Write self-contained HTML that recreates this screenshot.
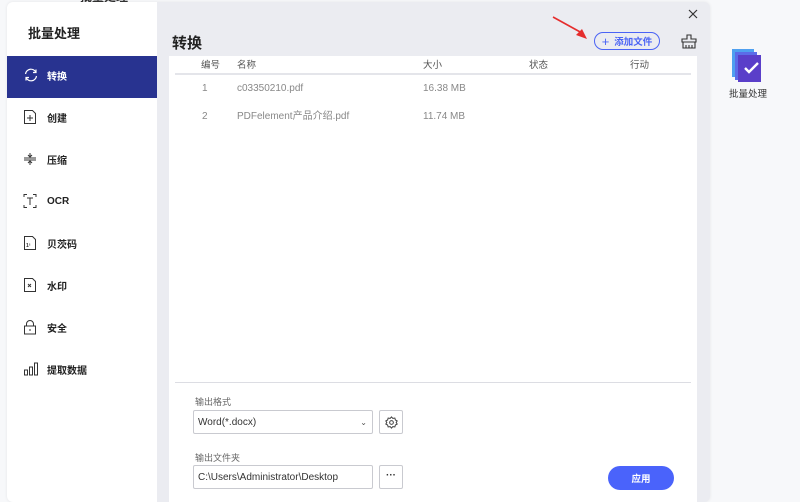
<!DOCTYPE html>
<html><head><meta charset="utf-8"><style>
*{margin:0;padding:0;box-sizing:border-box}
body{width:800px;height:500px;overflow:hidden;background:#f7f8fa;font-family:"Liberation Sans","Noto Sans CJK SC",sans-serif;position:relative}
.abs{position:absolute}
.dlg{left:7px;top:2px;width:703px;height:500px;background:#ebecf1;border-radius:6px;overflow:hidden;box-shadow:0 0 3px rgba(0,0,0,.08)}
.side{left:0;top:0;width:150px;height:500px;background:#fff}
.item{position:absolute;left:0;width:150px;height:42px;font-size:10px;font-weight:bold;color:#222;display:flex;align-items:center;padding-left:40px;padding-bottom:3px}
.item svg{position:absolute;left:16px;top:11px}
.act{background:#283390;color:#fff}
.panel{left:162px;top:54px;width:528px;height:450px;background:#fff}
.th{font-size:9.5px;color:#555;top:58px;line-height:12px}
.td{font-size:10px;color:#888;line-height:12px;white-space:nowrap}
.lbl{font-size:9px;color:#666}
.box{border:1px solid #c9cad0;border-radius:2px;background:#fff;font-size:10px;color:#333;display:flex;align-items:center;padding-left:4px}
</style></head><body>
<div class="abs" style="left:80px;top:-12px;font-size:12px;font-weight:bold;color:#333">批量处理</div>
<div class="abs dlg">
 <div class="abs side">
  <div class="abs" style="left:21px;top:21px;font-size:13px;font-weight:bold;color:#222">批量处理</div>
  <div class="item act" style="top:54px">
   <svg width="16" height="16" viewBox="0 0 16 16" fill="none" stroke="#fff" stroke-width="1.2"><path d="M2.5 7A5.5 5.5 0 0 1 13 5.5M13.5 9A5.5 5.5 0 0 1 3 10.5"/><path d="M13 2.5v3h-3M3 13.5v-3h3"/></svg>转换</div>
  <div class="item" style="top:96px"><svg width="14" height="16" viewBox="0 0 14 16" fill="none" stroke="#333" stroke-width="1"><path d="M1.5 1.5h8l3 3v10h-11z"/><path d="M7 6v6M4 9h6"/></svg>创建</div>
  <div class="item" style="top:138px"><svg width="14" height="16" viewBox="0 0 14 16" fill="none" stroke="#333" stroke-width="1"><path d="M1 7h12M1 9h12M7 2v4M5 4l2 2 2-2M7 14v-4M5 12l2-2 2 2"/></svg>压缩</div>
  <div class="item" style="top:180px"><svg width="14" height="16" viewBox="0 0 14 16" fill="none" stroke="#333" stroke-width="1"><path d="M1 4V1.5h3M10 1.5h3V4M1 12v2.5h3M10 14.5h3V12M4 5h6M7 5v7"/></svg>OCR</div>
  <div class="item" style="top:222px"><svg width="14" height="16" viewBox="0 0 14 16" fill="none" stroke="#333" stroke-width="1"><path d="M1.5 1.5h8l3 3v10h-11z"/><text x="3" y="12" font-size="5" fill="#333" stroke="none">1²</text></svg>贝茨码</div>
  <div class="item" style="top:264px"><svg width="14" height="16" viewBox="0 0 14 16" fill="none" stroke="#333" stroke-width="1"><path d="M1.5 1.5h8l3 3v10h-11z"/><path d="M5 10l3-3M5 7l3 3"/></svg>水印</div>
  <div class="item" style="top:306px"><svg width="14" height="16" viewBox="0 0 14 16" fill="none" stroke="#333" stroke-width="1"><rect x="1.5" y="7" width="11" height="8"/><path d="M3.5 7V5a3.5 3.5 0 0 1 7 0v2M7 10v2"/></svg>安全</div>
  <div class="item" style="top:348px"><svg width="16" height="16" viewBox="0 0 16 16" fill="none" stroke="#333" stroke-width="1"><rect x="1.5" y="9" width="3" height="5"/><rect x="6.5" y="6" width="3" height="8"/><rect x="11.5" y="2" width="3" height="12"/></svg>提取数据</div>
 </div>
 <div class="abs" style="left:165px;top:30px;font-size:15px;font-weight:bold;color:#222">转换</div>
 <svg class="abs" style="left:680px;top:6px" width="12" height="12" viewBox="0 0 12 12" stroke="#333" stroke-width="1.2"><path d="M2 2l8 8M10 2l-8 8"/></svg>
 <div class="abs" style="left:587px;top:30px;width:66px;height:18px;border:1.5px solid #4a63f5;border-radius:9px;font-size:9.5px;font-weight:bold;color:#4a63f5;display:flex;align-items:center;justify-content:center;gap:5px"><span style="font-weight:normal;font-size:13px">+</span>添加文件</div>
 <svg class="abs" style="left:674px;top:32px" width="16" height="15" viewBox="0 0 16 15" fill="none" stroke="#333" stroke-width="1.1"><path d="M6 1h4v4h5v3H1V5h5zM2 8v6h12V8M5 14v-3M8 14v-3M11 14v-3"/></svg>
 <svg class="abs" style="left:545px;top:13px" width="40" height="25" viewBox="0 0 40 25"><path d="M1 2L30 18" stroke="#e52d2d" stroke-width="1.6"/><path d="M35 24L24 20L30 14z" fill="#e52d2d"/></svg>
 <div class="abs panel"></div>
 <div class="abs th" style="left:194px">编号</div>
 <div class="abs th" style="left:230px">名称</div>
 <div class="abs th" style="left:416px">大小</div>
 <div class="abs th" style="left:522px">状态</div>
 <div class="abs th" style="left:623px">行动</div>
 <div class="abs" style="left:168px;top:71px;width:516px;height:2px;background:#e4e5ea"></div>
 <div class="abs td" style="left:195px;top:81px">1</div>
 <div class="abs td" style="left:230px;top:81px">c03350210.pdf</div>
 <div class="abs td" style="left:416px;top:81px">16.38 MB</div>
 <div class="abs td" style="left:195px;top:109px">2</div>
 <div class="abs td" style="left:230px;top:109px">PDFelement产品介绍.pdf</div>
 <div class="abs td" style="left:416px;top:109px">11.74 MB</div>
 <div class="abs" style="left:168px;top:380px;width:516px;height:1px;background:#dcdde3"></div>
 <div class="abs lbl" style="left:188px;top:393px">输出格式</div>
 <div class="abs box" style="left:186px;top:408px;width:180px;height:24px">Word(*.docx)<span style="position:absolute;right:5px;font-size:8px;color:#555">⌄</span></div>
 <div class="abs box" style="left:372px;top:408px;width:24px;height:24px;padding:0;justify-content:center"><svg width="13" height="13" viewBox="0 0 14 14" fill="none" stroke="#444" stroke-width="1.1"><circle cx="7" cy="7" r="2"/><path d="M7 1l1.5 1.6 2.1-.4.6 2.1 1.9 1-1 1.7 1 1.7-1.9 1-.6 2.1-2.1-.4L7 13l-1.5-1.6-2.1.4-.6-2.1-1.9-1 1-1.7-1-1.7 1.9-1 .6-2.1 2.1.4z"/></svg></div>
 <div class="abs lbl" style="left:188px;top:449px">输出文件夹</div>
 <div class="abs box" style="left:186px;top:463px;width:180px;height:24px">C:\Users\Administrator\Desktop</div>
 <div class="abs box" style="left:372px;top:463px;width:24px;height:24px;padding:0;justify-content:center;font-size:10px;font-weight:bold;padding-bottom:4px">···</div>
 <div class="abs" style="left:601px;top:464px;width:66px;height:24px;border-radius:12px;background:#4a63fb;color:#fff;font-size:9.5px;font-weight:bold;display:flex;align-items:center;justify-content:center">应用</div>
</div>
<svg class="abs" style="left:731px;top:48px" width="36" height="36" viewBox="0 0 36 36"><rect x="1" y="1" width="22" height="28" fill="#4fa0f0"/><rect x="4" y="4" width="22" height="28" fill="#5b6ce8"/><rect x="7" y="7" width="23" height="27" fill="#5a3fc9"/><path d="M14 20l4 4 9-9" stroke="#fff" stroke-width="2.4" fill="none"/></svg>
<div class="abs" style="left:729px;top:86px;font-size:9.5px;color:#333">批量处理</div>
</body></html>
